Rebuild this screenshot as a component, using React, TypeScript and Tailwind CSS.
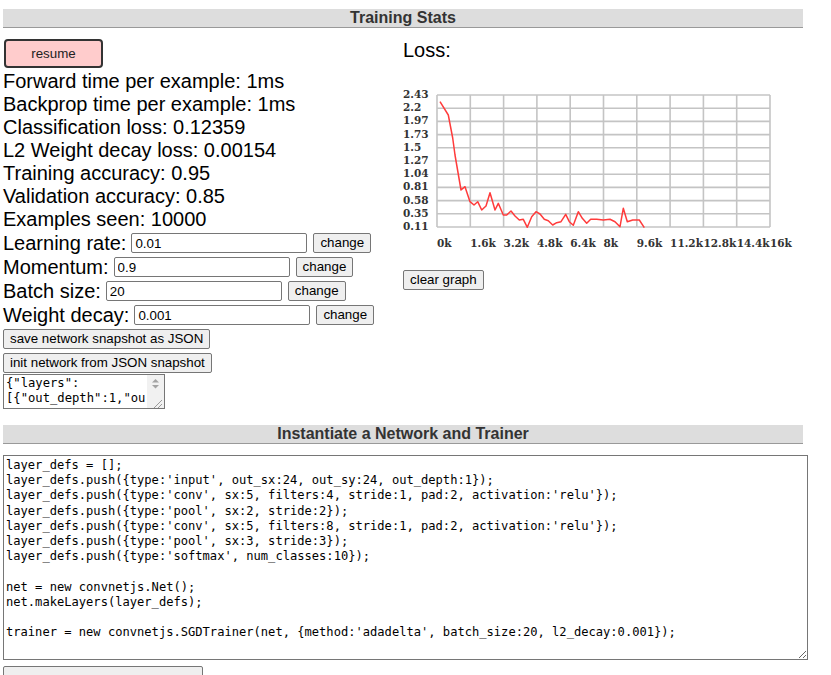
import React from "react";

const sans = "font-['Liberation_Sans',Arial,sans-serif]";
const btn =
  "h-[20px] rounded-[2px] border border-[#767676] bg-[#efefef] px-[6px] text-[13.33px] leading-none text-black";

const CODE = `layer_defs = [];
layer_defs.push({type:'input', out_sx:24, out_sy:24, out_depth:1});
layer_defs.push({type:'conv', sx:5, filters:4, stride:1, pad:2, activation:'relu'});
layer_defs.push({type:'pool', sx:2, stride:2});
layer_defs.push({type:'conv', sx:5, filters:8, stride:1, pad:2, activation:'relu'});
layer_defs.push({type:'pool', sx:3, stride:3});
layer_defs.push({type:'softmax', num_classes:10});

net = new convnetjs.Net();
net.makeLayers(layer_defs);

trainer = new convnetjs.SGDTrainer(net, {method:'adadelta', batch_size:20, l2_decay:0.001});`;

const STATS = [
  "Forward time per example: 1ms",
  "Backprop time per example: 1ms",
  "Classification loss: 0.12359",
  "L2 Weight decay loss: 0.00154",
  "Training accuracy: 0.95",
  "Validation accuracy: 0.85",
  "Examples seen: 10000",
];

const PARAMS = [
  { label: "Learning rate:", value: "0.01" },
  { label: "Momentum:", value: "0.9" },
  { label: "Batch size:", value: "20" },
  { label: "Weight decay:", value: "0.001" },
];

// loss curve, in page coordinates
const LOSS: [number, number][] = [
  [440, 101.7], [448.3, 115], [452.7, 138], [455, 155], [461, 190], [465, 186.7],
  [470, 201.7], [474, 205], [477.7, 201.7], [481.7, 210], [486, 206], [490, 192.7],
  [495, 210], [498.3, 203.3], [503.3, 215], [506.7, 215], [511, 211], [515, 216],
  [519.3, 220], [523.3, 219.3], [527.3, 227.3], [531.7, 216.7], [536, 211.7], [540, 214],
  [544.3, 219.3], [548.3, 220.7], [552.7, 225], [556.7, 222.7], [561, 221.7], [565.7, 214.3],
  [569.3, 221.7], [573.3, 225.3], [578.3, 211.7], [582.3, 218.3], [586.7, 223.3], [590.7, 219.3],
  [596.7, 219.3], [603.3, 220], [610, 219.3], [615, 221.7], [620, 226.7], [623.3, 208.3],
  [627.3, 221.7], [632.7, 220], [639.3, 220], [644.3, 227.7],
];

const Y_LABELS = ["2.43", "2.2", "1.97", "1.73", "1.5", "1.27", "1.04", "0.81", "0.58", "0.35", "0.11"];
const X_LABELS = ["0k", "1.6k", "3.2k", "4.8k", "6.4k", "8k", "9.6k", "11.2k", "12.8k", "14.4k", "16k"];

function SectionHeader({ title }: { title: string }) {
  return (
    <div className="h-[19px] w-[800px] border-b border-[#999999] bg-[#dddddd] text-center text-[16px] font-bold leading-[18px] text-[#333333]">
      {title}
    </div>
  );
}

function LossChart() {
  const x0 = 437, x1 = 770, y0 = 95, y1 = 227;
  const cols = 10, rows = 10;
  const dx = (x1 - x0) / cols, dy = (y1 - y0) / rows;
  return (
    <svg width={400} height={175} viewBox="403 80 400 175" className="block">
      <g stroke="#c4c4c4" strokeWidth={1.6} fill="none">
        {Array.from({ length: cols + 1 }, (_, i) => (
          <line key={`v${i}`} x1={x0 + i * dx} y1={y0} x2={x0 + i * dx} y2={y1} />
        ))}
        {Array.from({ length: rows + 1 }, (_, i) => (
          <line key={`h${i}`} x1={x0} y1={y0 + i * dy} x2={x1} y2={y0 + i * dy} />
        ))}
      </g>
      <g fill="#333333" fontFamily="'DejaVu Serif', serif" fontSize={10.5} fontWeight={600}>
        {Y_LABELS.map((l, i) => (
          <text key={l} x={403} y={y0 + i * dy + 3}>
            {l}
          </text>
        ))}
        {X_LABELS.map((l, i) => (
          <text key={l} x={x0 + i * dx} y={247}>
            {l}
          </text>
        ))}
      </g>
      <polyline
        points={LOSS.map(([x, y]) => `${x},${y}`).join(" ")}
        fill="none"
        stroke="#ff3b3b"
        strokeWidth={1.5}
        strokeLinejoin="round"
      />
    </svg>
  );
}

function SnapshotBox() {
  return (
    <div className="mt-[1px] flex h-[35px] w-[162px] overflow-hidden border border-[#767676] bg-white">
      <div className="flex-1 overflow-hidden whitespace-pre px-[2px] pt-[1px] font-['DejaVu_Sans_Mono',monospace] text-[12.2px] leading-[15px] text-black">
        <div>{'{"layers":'}</div>
        <div>{'[{"out_depth":1,"ou'}</div>
      </div>
      <div className="w-[17px] bg-[#f1f1f1]">
        <svg width={17} height={33} viewBox="0 0 17 33" className="block">
          <path d="M5 7.5 L8.5 4 L12 7.5 Z" fill="#a3a3a3" />
          <path d="M5 10 L8.5 13.5 L12 10 Z" fill="#a3a3a3" />
          <path d="M15 25 L7 33 M15 29 L11 33" stroke="#9a9a9a" strokeWidth={1} />
        </svg>
      </div>
    </div>
  );
}

export default function App() {
  return (
    <div className={`${sans} min-h-[675px] bg-white pl-[3px] pt-[9px] text-black`}>
      <SectionHeader title="Training Stats" />

      <div className="mt-[11px] flex">
        {/* left column: controls and stats */}
        <div className="w-[400px]">
          <button className="ml-[1px] h-[29px] w-[99px] rounded-[4px] border-2 border-[#333333] bg-[#ffcccc] text-[13.33px] text-[#222222]">
            resume
          </button>
          <div className="mt-[2px] text-[20px] leading-[23px]">
            {STATS.map((s) => (
              <div key={s}>{s}</div>
            ))}
          </div>
          <div className="text-[20px]">
            {PARAMS.map((p) => (
              <div key={p.label} className="flex h-[24px] items-center">
                <span className="leading-[23px]">{p.label}</span>
                <input
                  readOnly
                  defaultValue={p.value}
                  className="ml-[5px] h-[20px] w-[176px] rounded-[2px] border border-[#767676] px-[3px] text-[13.33px] text-black outline-none"
                />
                <button className={`${btn} ml-[6px]`}>change</button>
              </div>
            ))}
          </div>
          <button className={`${btn} mt-[2px] block`}>save network snapshot as JSON</button>
          <button className={`${btn} mt-[4px] block`}>init network from JSON snapshot</button>
          <SnapshotBox />
        </div>

        {/* right column: loss graph */}
        <div className="flex-1">
          <div className="text-[20px] leading-[23px]">Loss:</div>
          <div className="mt-[18px]">
            <LossChart />
          </div>
          <button className={`${btn} mt-[15px] block`}>clear graph</button>
        </div>
      </div>

      <div className="mt-[16px]">
        <SectionHeader title="Instantiate a Network and Trainer" />
      </div>
      <textarea
        readOnly
        defaultValue={CODE}
        spellCheck={false}
        className="mt-[11px] block h-[205px] w-[805px] border border-[#767676] p-[2px] font-['DejaVu_Sans_Mono',monospace] text-[12.1px] leading-[15.2px] text-black outline-none"
      />
      <button className="mt-[6px] block h-[30px] w-[200px] rounded-[2px] border border-[#767676] bg-[#efefef] text-[13.33px]">
        change network
      </button>
    </div>
  );
}
